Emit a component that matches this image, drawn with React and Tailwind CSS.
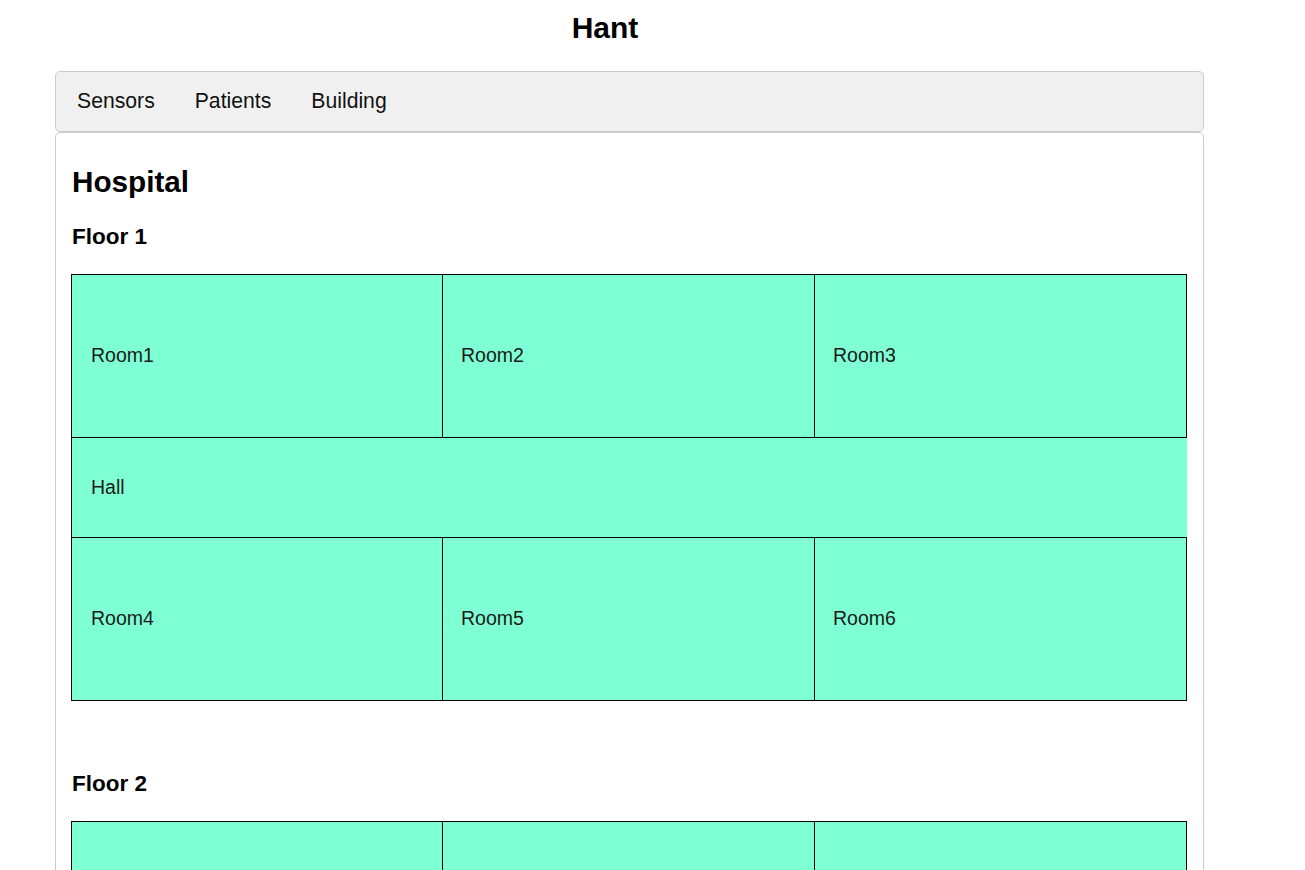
import React from 'react';

const floors = [
  { name: 'Floor 1', top: ['Room1', 'Room2', 'Room3'], bottom: ['Room4', 'Room5', 'Room6'] },
  { name: 'Floor 2', top: ['Room7', 'Room8', 'Room9'], bottom: ['Room10', 'Room11', 'Room12'] },
];

const navItems = ['Sensors', 'Patients', 'Building'];

const Room = ({ name, first }) => (
  <div
    className={`w-[372px] shrink-0 flex items-center bg-[#7fffd4] border-r border-black text-[19.5px] text-[#1a1a1a] ${
      first ? 'border-l pl-[19px]' : 'pl-[18px]'
    }`}
  >
    {name}
  </div>
);

const Floor = ({ floor }) => (
  <div className="mb-[70px]">
    {/* Floor title */}
    <h3 className="pl-px text-[22.5px] font-bold leading-[26px] mb-[24px]">{floor.name}</h3>

    <div className="w-[1116px]">
      {/* Top rooms */}
      <div className="flex h-[163px] border-t border-black">
        {floor.top.map((r, i) => (
          <Room key={r} name={r} first={i === 0} />
        ))}
      </div>

      {/* Hall */}
      <div className="flex items-center h-[100px] pl-[19px] bg-[#7fffd4] border-t border-l border-black text-[19.5px] text-[#1a1a1a]">
        Hall
      </div>

      {/* Bottom rooms */}
      <div className="flex h-[164px] border-t border-b border-black">
        {floor.bottom.map((r, i) => (
          <Room key={r} name={r} first={i === 0} />
        ))}
      </div>
    </div>
  </div>
);

const App = () => {
  return (
    <div className="w-[1305px] h-[870px] overflow-hidden bg-white text-black font-['Liberation_Sans',Arial,sans-serif]">
      {/* Page title */}
      <div className="w-[1210px] pt-[11px] mb-[26px]">
        <h1 className="text-[30px] font-bold leading-[34px] text-center">Hant</h1>
      </div>

      <div className="ml-[55px] w-[1149px]">
        {/* Navigation */}
        <nav className="flex items-center h-[61px] pl-px pb-[2px] bg-[#f0f0f0] border border-[#cccccc] rounded-[5px]">
          {navItems.map((item) => (
            <span key={item} className="px-[20px] text-[21.2px] text-[#111]">
              {item}
            </span>
          ))}
        </nav>

        {/* Content */}
        <div className="h-[800px] border border-[#cccccc] rounded-[5px] p-[15px]">
          <h2 className="pl-px mt-[17px] mb-[25px] text-[29.7px] font-bold leading-[34px]">Hospital</h2>
          {floors.map((f) => (
            <Floor key={f.name} floor={f} />
          ))}
        </div>
      </div>
    </div>
  );
};

export default App;
